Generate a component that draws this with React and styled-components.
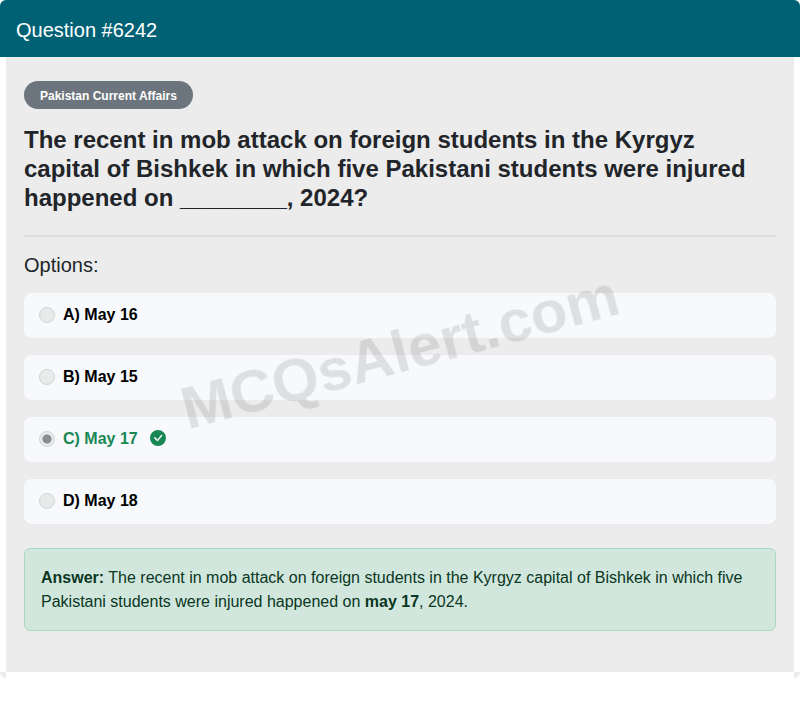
import React from "react";
import styled, { createGlobalStyle } from "styled-components";
import { BsCheckCircleFill } from "react-icons/bs";

const Global = createGlobalStyle`
  html, body { margin: 0; padding: 0; background: #fff; }
  body { font-family: "Liberation Sans", Arial, sans-serif; color: #212529; font-size: 16px; line-height: 24px; }
  * { box-sizing: border-box; }
`;

const Card = styled.article`
  width: 800px;
  height: 678px;
  background: #ececec;
  border-radius: 6px;
  display: flex;
  flex-direction: column;
`;

const Header = styled.header`
  height: 57px;
  flex: none;
  display: flex;
  align-items: center;
  padding: 2px 16px 0;
  background: #006175;
  color: #fff;
  font-size: 20px;
  line-height: 24px;
  border-radius: 6px 6px 0 0;
`;

const Body = styled.main`
  flex: 1;
  margin: 0 6px 6px;
  padding: 24px 18px;
  background: #ececec;
  box-shadow: -6px 0 0 #fff, 6px 0 0 #fff, 0 6px 0 #fff;
`;

const Badge = styled.span`
  display: inline-flex;
  align-items: center;
  height: 28px;
  padding: 2px 16px 0;
  border-radius: 14px;
  background: #6c757d;
  color: #fff;
  font-size: 12px;
  font-weight: 700;
  line-height: 12px;
`;

const Title = styled.h1`
  margin: 16px 0 0;
  font-size: 24px;
  line-height: 29px;
  font-weight: 700;
  color: #212529;
`;

const Rule = styled.hr`
  margin: 23px 0 0;
  border: 0;
  border-top: 2px solid #dfdfdf;
`;

const OptionsLabel = styled.h2`
  margin: 16px 0 0;
  font-size: 20px;
  line-height: 24px;
  font-weight: 400;
`;

const OptionList = styled.div`
  margin-top: 16px;
  display: flex;
  flex-direction: column;
  gap: 17px;
`;

const Option = styled.label`
  height: 45px;
  padding: 0 15px 1px;
  display: flex;
  align-items: center;
  gap: 8px;
  background: #f8f9fd;
  border-radius: 8px;
  font-weight: 700;
  color: ${(p) => (p.$correct ? "#198754" : "#000")};
`;

const Radio = styled.input.attrs({ type: "radio", disabled: true })`
  appearance: none;
  flex: none;
  width: 16px;
  height: 16px;
  margin: 0;
  border-radius: 50%;
  border: 1px solid #d2d3d5;
  background: ${(p) => (p.checked ? "radial-gradient(circle, #8b8d90 0 4.2px, #e9eaea 4.9px)" : "#e9eaea")};
`;

const Check = styled(BsCheckCircleFill)`
  margin: 0 0 2px 4px;
  width: 16px;
  height: 16px;
  color: #198754;
`;

const Answer = styled.div`
  margin-top: 24px;
  padding: 17px 16px 16px;
  background: #d1e7dd;
  border: 1px solid #aed6c4;
  border-radius: 6px;
  color: #0a3622;
`;

const Watermark = styled.div`
  position: fixed;
  top: 50%;
  left: 50%;
  transform: translate(-50%, -50%) rotate(-15deg);
  font-size: 60px;
  line-height: 72px;
  font-weight: 700;
  white-space: nowrap;
  color: rgba(0, 0, 0, 0.1);
  pointer-events: none;
`;

const options = [
  { id: "a", text: "A) May 16" },
  { id: "b", text: "B) May 15" },
  { id: "c", text: "C) May 17", correct: true },
  { id: "d", text: "D) May 18" },
];

export default function App() {
  return (
    <>
      <Global />
      <Card>
        <Header>Question #6242</Header>
        <Body>
          <Badge>Pakistan Current Affairs</Badge>
          <Title>
            The recent in mob attack on foreign students in the Kyrgyz capital of Bishkek in which five Pakistani students were injured happened on ________, 2024?
          </Title>
          <Rule />
          <OptionsLabel>Options:</OptionsLabel>
          <OptionList>
            {options.map((o) => (
              <Option key={o.id} $correct={o.correct}>
                <Radio name="q" checked={!!o.correct} readOnly />
                {o.text}
                {o.correct && <Check />}
              </Option>
            ))}
          </OptionList>
          <Answer>
            <strong>Answer:</strong> The recent in mob attack on foreign students in the Kyrgyz capital of Bishkek in which five Pakistani students were injured happened on <strong>may 17</strong>, 2024.
          </Answer>
        </Body>
      </Card>
      <Watermark>MCQsAlert.com</Watermark>
    </>
  );
}
